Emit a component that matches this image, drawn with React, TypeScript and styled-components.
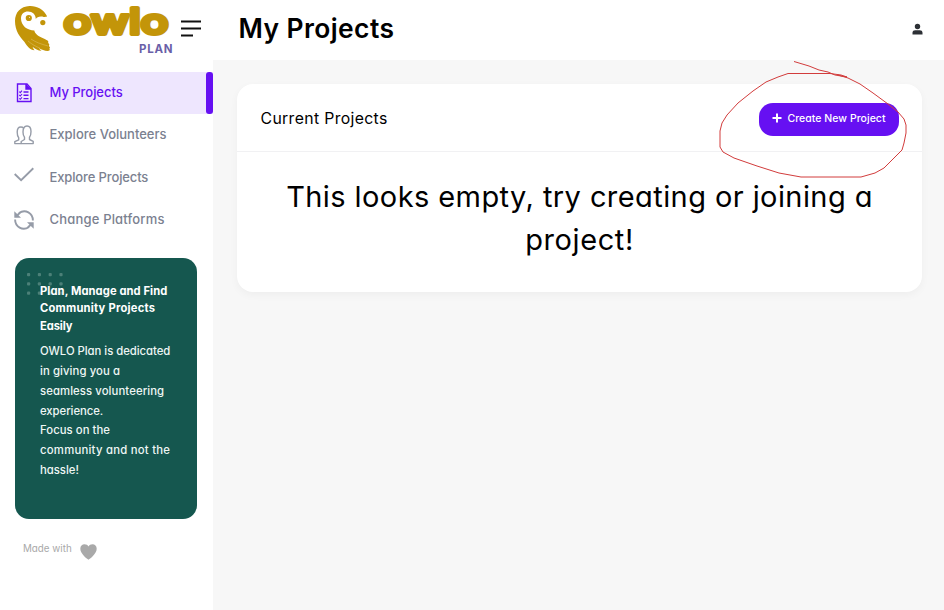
import React from "react";
import styled, { createGlobalStyle } from "styled-components";

const GlobalStyle = createGlobalStyle`
  * { box-sizing: border-box; }
  body {
    margin: 0;
    overflow: hidden;
    background: #f7f7f7;
    color: #000;
    font-family: Inter, "Open Sans", sans-serif;
    font-feature-settings: "cv11";
  }
  h1, h2, h3, p { margin: 0; }
`;

const Shell = styled.div`
  display: grid;
  grid-template-columns: 213px 1fr;
  height: 610px;
`;

const Sidebar = styled.aside`
  display: flex;
  flex-direction: column;
  background: #fff;
`;

const Brand = styled.div`
  display: flex;
  height: 72px;
  padding-left: 14px;
`;

const MenuButton = styled.button`
  display: flex;
  margin: 19px 0 0 6px;
  padding: 0;
  border: 0;
  background: none;
  height: 20px;
`;

const Nav = styled.nav`
  display: flex;
  flex-direction: column;
  gap: 0.4px;
`;

const NavItem = styled.a<{ $active?: boolean }>`
  display: flex;
  align-items: center;
  height: 42px;
  padding-left: 14px;
  color: ${(p) => (p.$active ? "#6610f2" : "#7b8190")};
  background: ${(p) => (p.$active ? "#eee6fe" : "transparent")};
  font-size: 13px;
  line-height: 16px;
  font-weight: ${(p) => (p.$active ? 500 : 450)};
`;

const NavLabel = styled.span<{ $gap: number }>`
  padding-bottom: 2px;
  letter-spacing: ${(p) => p.$gap}px;
  white-space: nowrap;
`;

const NavIcon = styled.svg<{ $lift?: number }>`
  width: 20px;
  height: 20px;
  margin-right: 15.5px;
  margin-bottom: ${(p) => p.$lift ?? 1}px;
`;

const ActiveBar = styled.span`
  width: 7px;
  height: 42px;
  margin-left: auto;
  border-radius: 3px;
  background: #6610f2;
`;

const Spaced = styled.span<{ $gap: number }>`
  letter-spacing: ${(p) => p.$gap}px;
  white-space: nowrap;
`;

const Promo = styled.section`
  width: 182px;
  height: 261px;
  margin: 16.8px 0 0 15px;
  padding: 25px 0 0 25px;
  border-radius: 14px;
  background: #15574f;
  color: #fff;
  position: relative;
`;

const Dots = styled.svg`
  position: absolute;
  left: 11px;
  top: 14px;
`;

const PromoTitle = styled.h3`
  display: flex;
  flex-direction: column;
  position: relative;
  font-size: 11.2px;
  font-weight: 700;
  line-height: 17.5px;
`;

const PromoText = styled.p`
  display: flex;
  flex-direction: column;
  margin-top: 6.8px;
  color: #eef6f4;
  font-size: 11.3px;
  font-weight: 500;
  line-height: 19.8px;
`;

const MadeWith = styled.footer`
  display: flex;
  align-items: flex-start;
  margin: 23.4px 0 0 23px;
  color: #a9a9a9;
  font-size: 9.8px;
  line-height: 14px;
`;

const Heart = styled.svg`
  width: 17px;
  height: 16px;
  margin: 2px 0 0 8.5px;
`;

const Main = styled.main`
  display: flex;
  flex-direction: column;
`;

const TopBar = styled.header`
  display: flex;
  align-items: center;
  justify-content: space-between;
  height: 60px;
  padding: 0 21px 5px 25.5px;
  background: #fff;
`;

const PageTitle = styled.h1`
  font-size: 26.4px;
  font-weight: 600;
  line-height: 36px;
`;

const UserIcon = styled.svg`
  width: 11px;
  height: 12px;
  margin-top: 3px;
`;

const Card = styled.section`
  width: 685px;
  height: 208px;
  margin: 24px 0 0 24px;
  border-radius: 16px;
  background: #fff;
  box-shadow: 0 3px 8px rgba(0, 0, 0, 0.04);
`;

const CardHeader = styled.div`
  display: flex;
  align-items: center;
  justify-content: space-between;
  height: 68px;
  padding: 3px 23px 0 23.5px;
  border-bottom: 1px solid #f1f1f3;
`;

const CardTitle = styled.h2`
  padding-bottom: 1px;
  font-size: 15.8px;
  font-weight: 430;
`;

const CreateWrap = styled.div`
  position: relative;
`;

const CreateButton = styled.button`
  display: flex;
  align-items: center;
  width: 140px;
  height: 33px;
  padding: 0 0 2px 13px;
  border: 0;
  border-radius: 14px;
  background: #6610f2;
  color: #fff;
  font: inherit;
  font-size: 10.5px;
  font-weight: 500;
`;

const PlusIcon = styled.svg`
  width: 10px;
  height: 10px;
  margin-right: 5.5px;
`;

const PenCircle = styled.svg`
  position: absolute;
  left: -44px;
  top: -46px;
  pointer-events: none;
`;

const EmptyMessage = styled.p`
  display: flex;
  flex-direction: column;
  align-items: center;
  padding-top: 23px;
  font-size: 29px;
  font-weight: 430;
  line-height: 43px;
`;

function Logo() {
  return (
    <svg width="161" height="60" viewBox="14 0 161 60">
      <path
        fill="#c39509"
        d="M47.200 16.500C43.500 9 36.500 5.700 29.500 6C20.500 6.400 15 12.500 15 21C15 31 20 37 24.500 42C27.500 46.500 30 50 34.500 50.200C33.500 48.800 33 48 32.500 46.800C35 49 38 50.800 41.500 50.800C40.500 49.900 39.500 49 38.800 48C42 50 45.500 51.200 49 50.800C50 50.200 50 49.600 49.200 48.800C50.500 48 50 46.800 48.800 46C49.800 44.800 49.200 43.700 48 43C49 41.800 48 40.600 46.500 39.900C42 37.500 37.500 36.500 35 32.500C33.500 30 34 26.500 35.500 23.500C37 20 39.500 17.800 43 17.200Z"
      />
      <path
        fill="#fff"
        d="M34.500 30.500C27 30.500 21 25.500 21 18.500C21 14 24 11.500 28 11.500C32.500 11.500 35.800 14.500 35.800 19C36.500 17.500 38.500 16.500 41 16.500C44.800 16.500 47.500 19.200 47.500 22.500C47.500 26 45 28 42 28C39.500 28 37.500 26.500 37 24.500Z"
      />
      <circle cx="28.800" cy="18" r="3.100" fill="#c39509" />
      <circle cx="42.800" cy="22.600" r="2.600" fill="#c39509" />
      <circle cx="29.500" cy="17.300" r="0.500" fill="#fff" />
      <path
        d="M28 41C32 44.500 36 46.500 40 48.200M31 39C36 42.500 41 44 48 46"
        fill="none"
        stroke="#dcbc5c"
        strokeWidth="0.600"
      />
      <text
        x="63.500"
        y="34.200"
        textLength="105"
        lengthAdjust="spacingAndGlyphs"
        fontFamily="Inter, sans-serif"
        fontSize="35"
        fontWeight="450"
        fill="#c39509"
        stroke="#c39509"
        strokeWidth="4"
        strokeLinejoin="round"
      >
        owlo
      </text>
      <text
        x="139"
        y="52.700"
        textLength="33.500"
        fontFamily="Inter, sans-serif"
        fontSize="11.500"
        fontWeight="700"
        fill="#6a5fa8"
      >
        PLAN
      </text>
    </svg>
  );
}

function DocumentIcon() {
  return (
    <NavIcon viewBox="0 0 20 20" fill="none" stroke="currentColor" strokeWidth="1.400">
      <path d="M3.500 1H13L17 5.500V18.500H3.500Z" />
      <path d="M12 1V6H17" fill="currentColor" />
      <path d="M9.500 9H14.500M9.500 12.300H14.500M9.500 15.600H14.500" />
      <path d="M5.300 8.700L6.300 9.700L8 7.700M5.300 12L6.300 13L8 11M5.300 15.300L6.300 16.300L8 14.300" strokeWidth="1.100" />
    </NavIcon>
  );
}

function PeopleIcon() {
  return (
    <NavIcon viewBox="0 0 20 20" fill="none" stroke="#969ca8" strokeWidth="1.400" strokeLinejoin="round">
      <path d="M7.200 18.600V16.500L10.500 14.500V12.300C9.300 11 9 9 9 7C9 3 10.500 1 13 1C15.700 1 17 3 17 6.500C17 9 16.600 11 15.500 12.300V14.500L19.200 16.300V18.600Z" />
      <path d="M9.500 3.200C9 2.500 8 2 6.900 2C4.300 2 3.200 4 3.200 7C3.200 9.300 3.500 11.500 4.700 12.800V14.800L0.800 16.700V18.600H7.200" />
    </NavIcon>
  );
}

function CheckIcon() {
  return (
    <NavIcon $lift={2} viewBox="0 0 20 20" fill="none" stroke="#969ca8" strokeWidth="1.900">
      <path d="M0.700 7L7.100 13.100L19.300 1.300" />
    </NavIcon>
  );
}

function RefreshIcon() {
  return (
    <NavIcon viewBox="0 0 20 20" fill="none" stroke="#969ca8" strokeWidth="1.900">
      <path d="M5 3C11.500 -1.500 18.900 3.500 18.900 10.500M15 17C8.500 21.500 1.100 16.500 1.100 9.500" />
      <path d="M0.300 1.300V7.700H7ZM19.700 18.700V12.300H13Z" fill="#969ca8" stroke="none" />
      <path d="M3 5.500L6 2.700M17 14.500L14 17.300" />
    </NavIcon>
  );
}

type Line = { text: string; gap: number };

const promoTitle: Line[] = [
  { text: "Plan, Manage and Find", gap: 0.09 },
  { text: "Community Projects", gap: 0.22 },
  { text: "Easily", gap: -0.1 },
];

const promoText: Line[] = [
  { text: "OWLO Plan is dedicated", gap: -0.02 },
  { text: "in giving you a", gap: 0.1 },
  { text: "seamless volunteering", gap: 0.1 },
  { text: "experience.", gap: -0.04 },
  { text: "Focus on the", gap: 0.05 },
  { text: "community and not the", gap: 0.25 },
  { text: "hassle!", gap: 0 },
];

const renderLine = (line: Line) => (
  <Spaced key={line.text} $gap={line.gap}>
    {line.text}
  </Spaced>
);

export default function App() {
  return (
    <>
      <GlobalStyle />
      <Shell>
        <Sidebar>
          <Brand>
            <Logo />
            <MenuButton aria-label="Toggle menu">
              <svg width="21" height="20" viewBox="0 0 21 20" stroke="#111" strokeWidth="2">
                <path d="M0 2.500H20M0 9.500H20M0 16.500H12" />
              </svg>
            </MenuButton>
          </Brand>
          <Nav>
            <NavItem $active>
              <DocumentIcon />
              <NavLabel $gap={-0.04}>My Projects</NavLabel>
              <ActiveBar />
            </NavItem>
            <NavItem>
              <PeopleIcon />
              <NavLabel $gap={0}>Explore Volunteers</NavLabel>
            </NavItem>
            <NavItem>
              <CheckIcon />
              <NavLabel $gap={-0.13}>Explore Projects</NavLabel>
            </NavItem>
            <NavItem>
              <RefreshIcon />
              <NavLabel $gap={0.18}>Change Platforms</NavLabel>
            </NavItem>
          </Nav>
          <Promo>
            <Dots width="38" height="24" fill="#4c8078">
              {[0, 1, 2].map((r) =>
                [0, 1, 2, 3].map((c) => (
                  <rect key={`${r}-${c}`} x={1 + c * 10.8} y={1 + r * 9.3} width="3.200" height="3.200" rx="1" />
                ))
              )}
            </Dots>
            <PromoTitle>{promoTitle.map(renderLine)}</PromoTitle>
            <PromoText>{promoText.map(renderLine)}</PromoText>
          </Promo>
          <MadeWith>
            <Spaced $gap={0}>Made with</Spaced>
            <Heart viewBox="0 0 17 16" fill="#a9a9a9">
              <path d="M8.500 15.700C7.500 15.200 0.300 9.800 0.300 4.700C0.300 2 2.200 0.300 4.500 0.300C6.300 0.300 7.700 1.100 8.500 2.500C9.300 1.100 10.700 0.300 12.500 0.300C14.800 0.300 16.700 2 16.700 4.700C16.700 9.800 9.500 15.200 8.500 15.700Z" />
            </Heart>
          </MadeWith>
        </Sidebar>
        <Main>
          <TopBar>
            <PageTitle>
              <Spaced $gap={0.42}>My Projects</Spaced>
            </PageTitle>
            <UserIcon viewBox="0 0 11 12" fill="#2d3035">
              <circle cx="5.500" cy="3.500" r="2.700" />
              <path d="M0.500 11.500V9.700C0.500 8 1.700 7.200 3.200 7.200H7.800C9.300 7.200 10.500 8 10.500 9.700V11.500Z" />
            </UserIcon>
          </TopBar>
          <Card>
            <CardHeader>
              <CardTitle>
                <Spaced $gap={0.35}>Current Projects</Spaced>
              </CardTitle>
              <CreateWrap>
                <CreateButton>
                  <PlusIcon viewBox="0 0 10 10" stroke="#fff" strokeWidth="2">
                    <path d="M5 0.500V9.500M0.500 5H9.500" />
                  </PlusIcon>
                  <Spaced $gap={0.03}>Create New Project</Spaced>
                </CreateButton>
                <PenCircle width="196" height="126" viewBox="715 57 196 126" fill="none" stroke="#d23c3c" strokeWidth="1">
                  <path d="M794 61.500L809 66L819 70L828 72L835 75L847 77L841 75L830 73.500L788 73.500L778 77L766 82L753 91L738 103L727 115L722 123L720 131L720 147L723 152L734 158L757 166L779 173L801 177L861 177L875 173L884 168L893 159L902 150L904 143L906 133L906 125L904 119L898 112L888 104L873 93L860 84L848 78L838 75" />
                </PenCircle>
              </CreateWrap>
            </CardHeader>
            <EmptyMessage>
              <Spaced $gap={0.42}>This looks empty, try creating or joining a</Spaced>
              <Spaced $gap={0.6}>project!</Spaced>
            </EmptyMessage>
          </Card>
        </Main>
      </Shell>
    </>
  );
}
